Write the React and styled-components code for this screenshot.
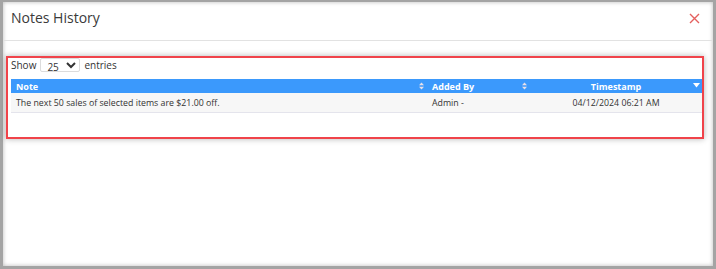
import React from "react";
import styled, { createGlobalStyle } from "styled-components";

const GlobalStyle = createGlobalStyle`
    body {
        margin: 0;
        background: #a4a4a4;
        font-family: "Open Sans", "Liberation Sans", sans-serif;
    }
`;

const notes = [
    {
        note: "The next 50 sales of selected items are $21.00 off.",
        addedBy: "Admin -",
        timestamp: "04/12/2024 06:21 AM",
    },
];

function SortIcon({ active }) {
    if (active) {
        return (
            <svg width="7" height="5" viewBox="0 0 7 5">
                <path d="M0 0 H7 L3.5 4.5 Z" fill="#ffffff" />
            </svg>
        );
    }
    return (
        <svg width="5" height="8" viewBox="0 0 5 8">
            <path d="M0 3.3 L2.5 0.5 L5 3.3 Z" fill="#e8e0e8" />
            <path d="M0 4.7 L2.5 7.5 L5 4.7 Z" fill="#e8e0e8" />
        </svg>
    );
}

function App() {
    return (
        <>
            <GlobalStyle />
            <Frame>
                <Modal>
                    <Header>
                        <Title>Notes History</Title>
                        <Close aria-label="close">
                            <svg width="11" height="11" viewBox="0 0 11 11">
                                <path d="M1 1 L10 10 M10 1 L1 10" stroke="#e4605e" strokeWidth="1.4" />
                            </svg>
                        </Close>
                    </Header>
                    <Body>
                        <Highlight>
                            <LengthBar>
                                Show
                                <Select defaultValue="25">
                                    <option>10</option>
                                    <option>25</option>
                                    <option>50</option>
                                    <option>100</option>
                                </Select>
                                entries
                            </LengthBar>
                            <Table>
                                <colgroup>
                                    <col style={{ width: 416 }} />
                                    <col style={{ width: 103 }} />
                                    <col />
                                </colgroup>
                                <thead>
                                    <tr>
                                        <Th>
                                            <HeadInner>
                                                Note
                                                <SortIcon />
                                            </HeadInner>
                                        </Th>
                                        <Th>
                                            <HeadInner>
                                                Added By
                                                <SortIcon />
                                            </HeadInner>
                                        </Th>
                                        <Th $center>
                                            Timestamp
                                            <ActiveSort>
                                                <SortIcon active />
                                            </ActiveSort>
                                        </Th>
                                    </tr>
                                </thead>
                                <tbody>
                                    {notes.map((n, i) => (
                                        <Row key={i}>
                                            <Td>{n.note}</Td>
                                            <Td>{n.addedBy}</Td>
                                            <Td $center>{n.timestamp}</Td>
                                        </Row>
                                    ))}
                                </tbody>
                            </Table>
                        </Highlight>
                    </Body>
                </Modal>
            </Frame>
        </>
    );
}

export default App;

const Frame = styled.div`
    width: 716px;
    height: 269px;
    box-sizing: border-box;
    padding: 2px 3px 3px 3px;
`;

const Modal = styled.div`
    height: 100%;
    background: #ffffff;
    box-shadow: inset 0 0 4px rgba(0, 0, 0, 0.28);
    display: flex;
    flex-direction: column;
`;

const Header = styled.div`
    height: 38px;
    border-bottom: 1px solid #e2e2e2;
    display: flex;
    align-items: flex-start;
    justify-content: space-between;
    padding: 0 13px 0 8px;
`;

const Title = styled.h4`
    margin: 6px 0 0;
    font-size: 14px;
    font-weight: 400;
    color: #3a3a3a;
`;

const Close = styled.button`
    margin-top: 11px;
    padding: 0;
    border: 0;
    background: none;
    display: flex;
`;

const Body = styled.div`
    padding: 15px 9px 0 3px;
`;

const Highlight = styled.div`
    height: 83px;
    box-sizing: border-box;
    border: 2px solid #f0434a;
    box-shadow: 0 0 6px rgba(0, 0, 0, 0.3);
    padding: 0 0 0 3px;
`;

const LengthBar = styled.div`
    height: 21px;
    display: flex;
    align-items: flex-start;
    gap: 4px;
    font-size: 10px;
    line-height: 14px;
    color: #333333;
`;

const Select = styled.select`
    width: 40px;
    height: 14px;
    padding: 0 0 0 2px;
    border: 1px solid #dcdcdc;
    border-radius: 2px;
    background: #ffffff;
    font-family: inherit;
    font-size: 10px;
    color: #333333;
`;

const Table = styled.table`
    width: 100%;
    border-collapse: collapse;
    table-layout: fixed;
`;

const Th = styled.th`
    position: relative;
    height: 14px;
    padding: 0 5px;
    background: #3b99fc;
    color: #ffffff;
    font-size: 9px;
    font-weight: 700;
    text-align: ${(p) => (p.$center ? "center" : "left")};
`;

const HeadInner = styled.div`
    display: flex;
    align-items: center;
    justify-content: space-between;

    svg {
        margin-right: -2px;
    }
`;

const ActiveSort = styled.span`
    position: absolute;
    right: 2px;
    top: 4px;
    display: flex;
`;

const Row = styled.tr`
    background: #f7f7f7;
    border-bottom: 1px solid #e4e4ec;
`;

const Td = styled.td`
    height: 19px;
    padding: 0 5px;
    font-size: 8.8px;
    color: #333333;
    text-align: ${(p) => (p.$center ? "center" : "left")};
`;
